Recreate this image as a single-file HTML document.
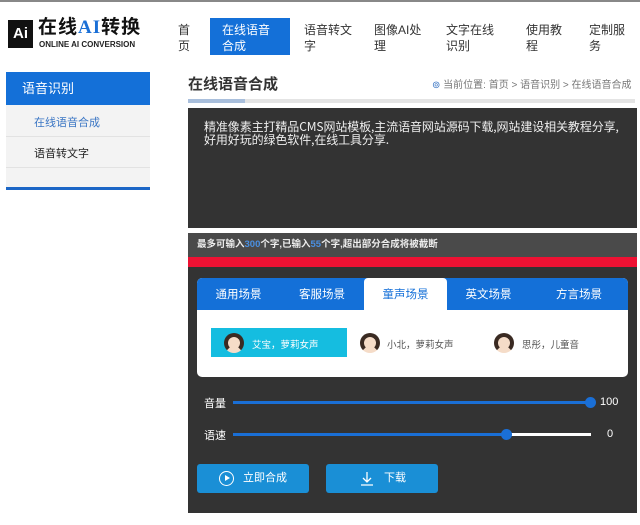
<!DOCTYPE html>
<html><head><meta charset="utf-8"><style>
*{margin:0;padding:0;box-sizing:border-box}
body{width:640px;height:525px;background:#fff;font-family:"Liberation Sans","Noto Sans CJK SC",sans-serif;position:relative;overflow:hidden;color:#333}
.a{position:absolute}
.nav{font-size:12px;line-height:16px;color:#333;word-break:break-all}
</style></head><body>
<div class="a" style="left:0;top:0;width:640px;height:2px;background:#888"></div>
<div class="a" style="left:8px;top:20px;width:25px;height:28px;background:#111;color:#fff;font-weight:bold;font-size:15px;line-height:28px;text-align:center">Ai</div>
<div class="a" style="left:38px;top:17px;font-size:19px;font-weight:bold;color:#111;line-height:22px;letter-spacing:1px">在线<span style="color:#1a6fd6;font-family:'Liberation Serif',serif">AI</span>转换</div>
<div class="a" style="left:39px;top:40px;font-size:8px;font-weight:bold;color:#222;white-space:nowrap">ONLINE AI CONVERSION</div>
<div class="a nav" style="left:178px;top:22px;width:14px">首页</div>
<div class="a" style="left:210px;top:18px;width:80px;height:37px;background:#1470d8"></div>
<div class="a nav" style="left:222px;top:22px;width:52px;color:#fff">在线语音合成</div>
<div class="a nav" style="left:304px;top:22px;width:52px">语音转文字</div>
<div class="a nav" style="left:374px;top:22px;width:50px">图像AI处理</div>
<div class="a nav" style="left:446px;top:22px;width:52px">文字在线识别</div>
<div class="a nav" style="left:526px;top:22px;width:40px">使用教程</div>
<div class="a nav" style="left:589px;top:22px;width:40px">定制服务</div>
<div class="a" style="left:6px;top:72px;width:144px;height:33px;background:#1470d8;color:#fff;font-size:13px;line-height:33px;padding-left:16px">语音识别</div>
<div class="a" style="left:6px;top:105px;width:144px;height:83px;background:#f3f3f3"></div>
<div class="a" style="left:6px;top:136px;width:144px;height:1px;background:#e2e2e2"></div>
<div class="a" style="left:6px;top:167px;width:144px;height:1px;background:#e2e2e2"></div>
<div class="a" style="left:34px;top:114px;font-size:11px;color:#3b76c4">在线语音合成</div>
<div class="a" style="left:34px;top:145px;font-size:11px;color:#222">语音转文字</div>
<div class="a" style="left:6px;top:187px;width:144px;height:3px;background:#1b66c6"></div>
<div class="a" style="left:188px;top:73px;font-size:15px;font-weight:bold;color:#333">在线语音合成</div>
<div class="a" style="left:432px;top:76px;font-size:10px;color:#777;white-space:nowrap"><span style="color:#3b76c4">⊚</span> 当前位置: 首页 &gt; 语音识别 &gt; 在线语音合成</div>
<div class="a" style="left:188px;top:99px;width:447px;height:4px;background:#e4e4e4"></div>
<div class="a" style="left:188px;top:99px;width:57px;height:4px;background:#a9bfdc"></div>
<div class="a" style="left:188px;top:108px;width:449px;height:120px;background:#333;color:#eee;font-size:12px;line-height:13px;padding:12px 8px 0 16px;font-family:'Noto Sans CJK SC',sans-serif;letter-spacing:-0.1px">精准像素主打精品CMS网站模板,主流语音网站源码下载,网站建设相关教程分享,好用好玩的绿色软件,在线工具分享.</div>
<div class="a" style="left:188px;top:233px;width:449px;height:24px;background:#4a4a4a;color:#eee;font-size:9.5px;line-height:24px;padding-left:9px;font-weight:bold">最多可输入<span style="color:#4a90e2">300</span>个字,已输入<span style="color:#4a90e2">55</span>个字,超出部分合成将被截断</div>
<div class="a" style="left:188px;top:257px;width:449px;height:10px;background:#ee1133"></div>
<div class="a" style="left:188px;top:267px;width:449px;height:246px;background:#333"></div>
<div class="a" style="left:197px;top:278px;width:431px;height:99px;background:#fff;border-radius:5px;overflow:hidden">
 <div style="height:32px;background:#1470d8;display:flex;font-size:11.5px;color:#fff;line-height:34px">
  <div style="width:83px;text-align:center">通用场景</div>
  <div style="width:84px;text-align:center">客服场景</div>
  <div style="width:83px;text-align:center;background:#fff;color:#1470d8;border-radius:4px 4px 0 0">童声场景</div>
  <div style="width:83px;text-align:center">英文场景</div>
  <div style="width:98px;text-align:center">方言场景</div>
 </div>
</div>
<div class="a" style="left:211px;top:328px;width:136px;height:29px;background:#15bde0"></div>
<div class="a" style="left:224px;top:333px;width:20px;height:20px;border-radius:50%;background:#f5dcc8;border:4px solid #3a2a22;border-bottom-color:#f5dcc8"></div>
<div class="a" style="left:252px;top:337px;font-size:9.5px;color:#fff">艾宝，萝莉女声</div>
<div class="a" style="left:360px;top:333px;width:20px;height:20px;border-radius:50%;background:#f5dcc8;border:4px solid #3a2a22;border-bottom-color:#f5dcc8"></div>
<div class="a" style="left:387px;top:337px;font-size:9.5px;color:#555">小北，萝莉女声</div>
<div class="a" style="left:494px;top:333px;width:20px;height:20px;border-radius:50%;background:#f5dcc8;border:4px solid #3a2a22;border-bottom-color:#f5dcc8"></div>
<div class="a" style="left:522px;top:337px;font-size:9.5px;color:#555">思彤，儿童音</div>
<div class="a" style="left:204px;top:395px;font-size:11px;color:#fff">音量</div>
<div class="a" style="left:233px;top:401px;width:358px;height:3px;background:#1a6fd6"></div>
<div class="a" style="left:585px;top:397px;width:11px;height:11px;border-radius:50%;background:#1a6fd6"></div>
<div class="a" style="left:600px;top:396px;font-size:11px;color:#fff">100</div>
<div class="a" style="left:204px;top:427px;font-size:11px;color:#fff">语速</div>
<div class="a" style="left:233px;top:433px;width:358px;height:3px;background:#fff"></div>
<div class="a" style="left:233px;top:433px;width:273px;height:3px;background:#1a6fd6"></div>
<div class="a" style="left:501px;top:429px;width:11px;height:11px;border-radius:50%;background:#1a6fd6"></div>
<div class="a" style="left:607px;top:428px;font-size:11px;color:#fff">0</div>
<div class="a" style="left:197px;top:464px;width:112px;height:29px;background:#1a8fd6;border-radius:3px;color:#fff;font-size:11px;line-height:29px">
 <div class="a" style="left:22px;top:7px;width:15px;height:15px;border:1px solid #fff;border-radius:50%"></div>
 <div class="a" style="left:28px;top:11px;width:0;height:0;border-left:5px solid #fff;border-top:3.5px solid transparent;border-bottom:3.5px solid transparent"></div>
 <span class="a" style="left:46px;top:0">立即合成</span></div>
<div class="a" style="left:326px;top:464px;width:112px;height:29px;background:#1a8fd6;border-radius:3px;color:#fff;font-size:11px;line-height:29px">
 <svg class="a" style="left:34px;top:7px" width="14" height="15" viewBox="0 0 14 15"><path d="M7 1v10M3 7l4 4 4-4M1 14h12" stroke="#fff" stroke-width="1.3" fill="none"/></svg>
 <span class="a" style="left:58px;top:0">下载</span></div>
</body></html>
